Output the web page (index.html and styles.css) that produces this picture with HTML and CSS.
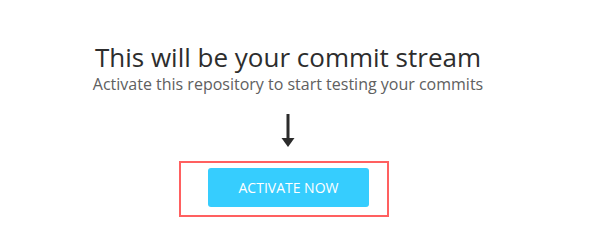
FILE: index.html
```html
<!DOCTYPE html>
<html>
<head>
<meta charset="utf-8">
<link rel="stylesheet" href="styles.css">
</head>
<body>
<div class="stream-empty">
  <h1 class="title">This will be your commit stream</h1>
  <p class="subtitle">Activate this repository to start testing your commits</p>
  <svg class="arrow" width="14" height="33" viewBox="0 0 14 33" aria-hidden="true">
    <rect x="5.5" y="0" width="3" height="25" fill="#2b2b2b"/>
    <polygon points="0.5,24 13.5,24 7,33" fill="#2b2b2b"/>
  </svg>
  <div class="highlight">
    <button class="activate">ACTIVATE NOW</button>
  </div>
</div>
</body>
</html>
```

FILE: styles.css
```css
html, body {
  margin: 0;
  padding: 0;
  background: #ffffff;
}

.stream-empty {
  width: 576px;
  display: flex;
  flex-direction: column;
  align-items: center;
  font-family: "Open Sans", "Liberation Sans", sans-serif;
  padding-top: 40px;
}

.title {
  margin: 0;
  font-size: 26px;
  line-height: 34px;
  font-weight: 400;
  color: #2d2d2d;
}

.subtitle {
  margin: 0;
  font-size: 16px;
  line-height: 21px;
  color: #606060;
}

.arrow {
  display: block;
  margin-top: 19px;
}

.highlight {
  margin-top: 14px;
  margin-right: 8px;
  border: 2px solid #ff6060;
  padding: 5px 18px 8px 27px;
  display: flex;
}

.activate {
  width: 161px;
  height: 39px;
  border: 0;
  border-radius: 3px;
  background: #36cdfe;
  color: #ffffff;
  font-family: "Open Sans", "Liberation Sans", sans-serif;
  font-size: 14px;
  padding: 0;
  cursor: pointer;
}
```
